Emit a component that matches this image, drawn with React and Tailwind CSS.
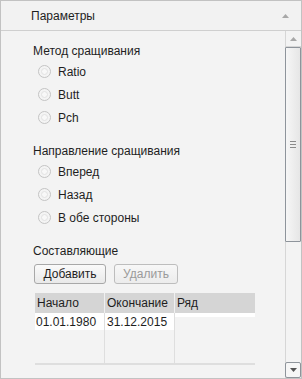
import React from "react";

const Radio = ({ label }) => (
  <div className="flex items-center h-[23px] pl-[37px]">
    <span className="w-[13px] h-[13px] rounded-full border border-[#c4c4c4] bg-[#f4f4f4] flex items-center justify-center">
      <span className="w-[7px] h-[7px] rounded-full border border-[#e2e2e2] bg-[#f8f8f8]" />
    </span>
    <span className="ml-[7px] text-[12px] text-[#1e1e1e]">{label}</span>
  </div>
);

export default function App() {
  return (
    <div
      className="w-[302px] h-[379px] bg-[#f3f3f3] border border-[#c2c2c2] flex flex-col overflow-hidden"
      style={{ fontFamily: "'Liberation Sans', Arial, sans-serif" }}
    >
      {/* Header */}
      <div className="h-[30px] shrink-0 flex items-center justify-between border-b border-[#cfcfcf] bg-[#f2f2f2] pl-[30px] pr-[12px] text-[12px] text-[#1e1e1e]">
        <span>Параметры</span>
        <svg width="7" height="4" viewBox="0 0 7 4">
          <path d="M0 4 L3.5 0 L7 4 Z" fill="#a8a8a8" />
        </svg>
      </div>

      <div className="flex flex-1 min-h-0">
        {/* Content */}
        <div className="flex-1 pt-[11px] text-[12px] text-[#1e1e1e]">
          <div className="pl-[32px] h-[18px]">Метод сращивания</div>
          <Radio label="Ratio" />
          <Radio label="Butt" />
          <Radio label="Pch" />
          <div className="pl-[32px] h-[18px] mt-[13px]">Направление сращивания</div>
          <Radio label="Вперед" />
          <Radio label="Назад" />
          <Radio label="В обе стороны" />
          <div className="pl-[32px] h-[18px] mt-[13px]">Составляющие</div>
          <div className="flex gap-[8px] pl-[33px] mt-[4px]">
            <button className="h-[20px] w-[72px] rounded-[3px] border border-[#a8a8a8] bg-gradient-to-b from-[#fafafa] to-[#e9e9e9] text-[12px] text-[#1e1e1e]">
              Добавить
            </button>
            <button className="h-[20px] w-[64px] rounded-[3px] border border-[#bdbdbd] bg-gradient-to-b from-[#f7f7f7] to-[#ececec] text-[12px] text-[#9a9a9a]">
              Удалить
            </button>
          </div>
          <div className="ml-[34px] mt-[9px] w-[220px] border-b-2 border-[#dedede]">
            <div className="grid grid-cols-[69px_70px_81px] h-[20px] bg-[#d5d5d5] items-center">
              <span className="pl-[2px]">Начало</span>
              <span className="pl-[2px] border-l border-[#f0f0f0] h-full flex items-center">Окончание</span>
              <span className="pl-[2px] border-l border-[#f0f0f0] h-full flex items-center">Ряд</span>
            </div>
            <div className="grid grid-cols-[69px_70px_81px] h-[50px]">
              <div className="flex flex-col">
                <span className="bg-white h-[17px] pl-[1px] flex items-center">01.01.1980</span>
              </div>
              <div className="flex flex-col border-l border-[#dedede]">
                <span className="bg-white h-[17px] pl-[2px] flex items-center">31.12.2015</span>
              </div>
              <div className="flex flex-col border-l border-[#dedede]">
                <span className="bg-white h-[4px]" />
              </div>
            </div>
          </div>
        </div>

        {/* Scrollbar */}
        <div className="w-[16px] shrink-0 flex flex-col bg-[#f3f3f3] border-l border-[#d6d6d6]">
          <div className="h-[16px] shrink-0 flex items-center justify-center border-b border-[#d6d6d6]">
            <svg width="7" height="4" viewBox="0 0 7 4">
              <path d="M0 4 L3.5 0 L7 4 Z" fill="#a8a8a8" />
            </svg>
          </div>
          <div className="h-[195px] shrink-0 -ml-px border border-[#8e949b] rounded-[1px] bg-gradient-to-r from-[#f6f6f6] to-[#e6e6e6] flex flex-col items-center justify-center gap-[2px]">
            <span className="w-[6px] h-px bg-[#8a8a8a]" />
            <span className="w-[6px] h-px bg-[#8a8a8a]" />
            <span className="w-[6px] h-px bg-[#8a8a8a]" />
          </div>
          <div className="flex-1" />
          <div className="h-[16px] shrink-0 -ml-px flex items-center justify-center border border-[#8e949b] rounded-[2px] bg-[#f6f6f6]">
            <svg width="7" height="4" viewBox="0 0 7 4">
              <path d="M0 0 L3.5 4 L7 0 Z" fill="#555" />
            </svg>
          </div>
        </div>
      </div>
    </div>
  );
}
